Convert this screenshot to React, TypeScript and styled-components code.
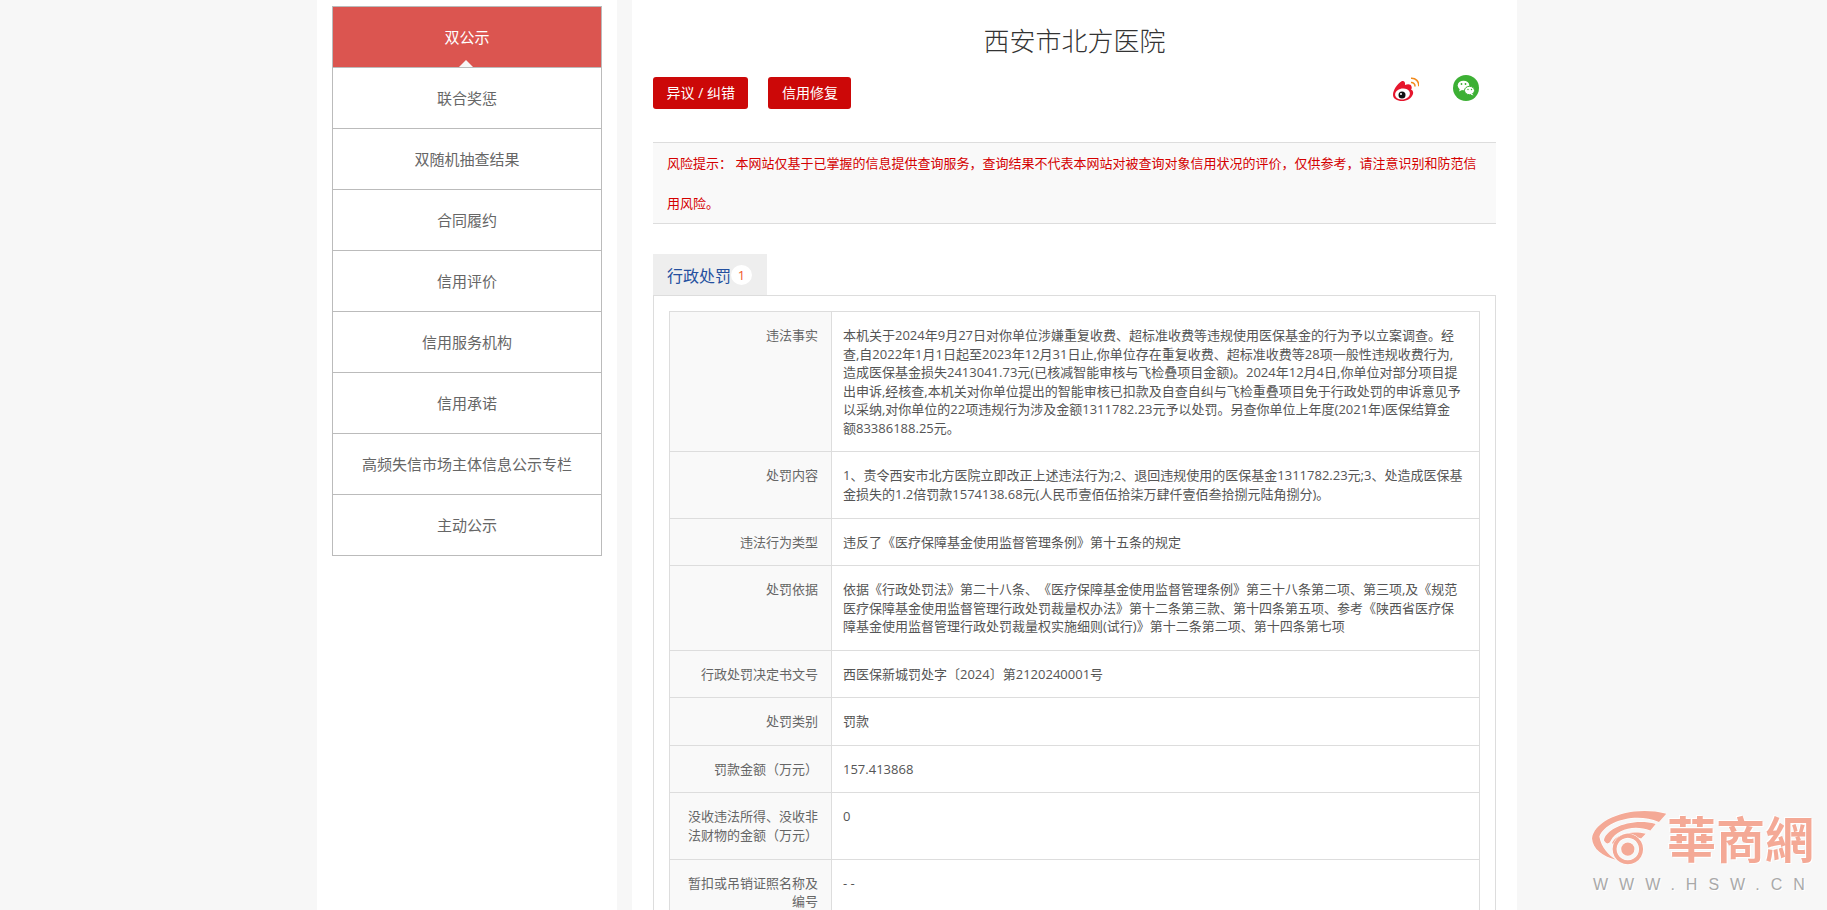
import React from 'react';
import styled, { createGlobalStyle } from 'styled-components';

const FONT = '"Open Sans", "Noto Sans CJK SC", "Liberation Sans", sans-serif';

const RISK_TEXT = '风险提示\uFF1A 本网站仅基于已掌握的信息提供查询服务\uFF0C查询结果不代表本网站对被查询对象信用状况的评价\uFF0C仅供参考\uFF0C请注意识别和防范信用风险。';

const menuItems = [
    '双公示',
    '联合奖惩',
    '双随机抽查结果',
    '合同履约',
    '信用评价',
    '信用服务机构',
    '信用承诺',
    '高频失信市场主体信息公示专栏',
    '主动公示',
];

const rows = [
    {
        label: '违法事实',
        lines: [
            '本机关于2024年9月27日对你单位涉嫌重复收费、超标准收费等违规使用医保基金的行为予以立案调查。经',
            '查,自2022年1月1日起至2023年12月31日止,你单位存在重复收费、超标准收费等28项一般性违规收费行为,',
            '造成医保基金损失2413041.73元(已核减智能审核与飞检叠项目金额)。2024年12月4日,你单位对部分项目提',
            '出申诉,经核查,本机关对你单位提出的智能审核已扣款及自查自纠与飞检重叠项目免于行政处罚的申诉意见予',
            '以采纳,对你单位的22项违规行为涉及金额1311782.23元予以处罚。另查你单位上年度(2021年)医保结算金',
            '额83386188.25元。',
        ],
    },
    {
        label: '处罚内容',
        lines: [
            '1、责令西安市北方医院立即改正上述违法行为;2、退回违规使用的医保基金1311782.23元;3、处造成医保基',
            '金损失的1.2倍罚款1574138.68元(人民币壹佰伍拾柒万肆仟壹佰叁拾捌元陆角捌分)。',
        ],
    },
    { label: '违法行为类型', lines: ['违反了《医疗保障基金使用监督管理条例》第十五条的规定'] },
    {
        label: '处罚依据',
        lines: [
            '依据《行政处罚法》第二十八条、《医疗保障基金使用监督管理条例》第三十八条第二项、第三项,及《规范',
            '医疗保障基金使用监督管理行政处罚裁量权办法》第十二条第三款、第十四条第五项、参考《陕西省医疗保',
            '障基金使用监督管理行政处罚裁量权实施细则(试行)》第十二条第二项、第十四条第七项',
        ],
    },
    { label: '行政处罚决定书文号', lines: ['西医保新城罚处字〔2024〕第2120240001号'] },
    { label: '处罚类别', lines: ['罚款'] },
    { label: '罚款金额\uFF08万元\uFF09', lines: ['157.413868'] },
    { label: '没收违法所得、没收非法财物的金额\uFF08万元\uFF09', lines: ['0'] },
    { label: '暂扣或吊销证照名称及编号', lines: ['- -'] },
];

const WeiboIcon = () => (
    <svg width="26" height="24" viewBox="0 0 26 24">
        <path d="M9 4C11 3.500 12.500 5 12 8C15 6.500 18 7 18.500 9.500C19 11 18.500 12 18 12.500C20 13.500 20.500 15 20 17C18.500 21.500 14 24 9 24C4 24 0 21.500 0 18C0 13 4 7 9 4z" fill="#e6162d" />
        <ellipse cx="9.500" cy="17" rx="7.500" ry="5.500" transform="rotate(-10 9.500 17)" fill="#fff" />
        <circle cx="9" cy="18" r="3.500" fill="#111" />
        <circle cx="8" cy="17" r="1" fill="#fff" />
        <path d="M18 5.500c2.300-.2 4.200 1.700 4 4" fill="none" stroke="#f28a1c" strokeWidth="1.500" />
        <path d="M18 1.300c4.800-.3 8.200 3.200 7.700 8" fill="none" stroke="#f28a1c" strokeWidth="1.500" />
    </svg>
);

const WechatIcon = () => (
    <svg width="26" height="26" viewBox="0 0 26 26">
        <circle cx="13" cy="13" r="13" fill="#3cb034" />
        <ellipse cx="10.500" cy="10.500" rx="5.800" ry="4.800" fill="#fff" />
        <path d="M7 13.500l-1 3 3-1.500z" fill="#fff" />
        <ellipse cx="16.500" cy="15.500" rx="5" ry="4.200" fill="#fff" stroke="#3cb034" strokeWidth="1" />
        <path d="M19 18.500l1.500 2-3-1z" fill="#fff" />
        <circle cx="8.500" cy="9" r="0.900" fill="#3cb034" />
        <circle cx="12.500" cy="9" r="0.900" fill="#3cb034" />
        <circle cx="15" cy="14.500" r="0.700" fill="#3cb034" />
        <circle cx="18.500" cy="14.500" r="0.700" fill="#3cb034" />
    </svg>
);

const EyeLogo = () => (
    <svg width="77" height="58" viewBox="55 80 230 175">
        <g fill="#f4a996" stroke="#fff" strokeWidth="3" paintOrder="stroke">
            <path d="M60 172C66 118 170 70 284 97L262 122C190 92 100 120 82 166C88 200 110 222 132 236C92 226 62 204 60 172z" />
            <path d="M96 178C100 142 180 108 252 128L236 148C186 128 134 146 118 176C112 190 104 190 96 178z" />
            <path d="M120 186C130 160 180 146 222 158L208 172C180 162 146 170 132 192z" />
            <path fillRule="evenodd" d="M168 158a46 46 0 1 0 .1 0zM168 170a34 34 0 1 1-.1 0z" />
            <circle cx="168" cy="204" r="20" />
        </g>
    </svg>
);

const App = () => (
    <Page>
        <GlobalStyle />
        <Container>
            <Sidebar>
                <Menu>
                    {menuItems.map((item, i) => (
                        <MenuItem key={item} $active={i === 0}>{item}</MenuItem>
                    ))}
                </Menu>
            </Sidebar>
            <Main>
                <Title>西安市北方医院</Title>
                <ActionBar>
                    <ActionButton>异议 / 纠错</ActionButton>
                    <ActionButton>信用修复</ActionButton>
                    <ShareIcons>
                        <ShareLink $top={2}><WeiboIcon /></ShareLink>
                        <ShareLink><WechatIcon /></ShareLink>
                    </ShareIcons>
                </ActionBar>
                <RiskNotice>{RISK_TEXT}</RiskNotice>
                <Tab>
                    <TabLabel>行政处罚</TabLabel>
                    <TabBadge>1</TabBadge>
                </Tab>
                <TabPanel>
                    <DetailTable>
                        <colgroup>
                            <col width="162" />
                            <col />
                        </colgroup>
                        <tbody>
                            {rows.map(row => (
                                <tr key={row.label}>
                                    <DetailLabel>{row.label}</DetailLabel>
                                    <DetailValue>
                                        {row.lines.map(line => <ValueLine key={line}>{line}</ValueLine>)}
                                    </DetailValue>
                                </tr>
                            ))}
                        </tbody>
                    </DetailTable>
                </TabPanel>
            </Main>
        </Container>
        <Watermark>
            <WatermarkTop>
                <EyeLogo />
                <WatermarkName>華商網</WatermarkName>
            </WatermarkTop>
            <WatermarkUrl>WWW.HSW.CN</WatermarkUrl>
        </Watermark>
    </Page>
);

export default App;

/*-----------------STYLES-----------------*/
const GlobalStyle = createGlobalStyle`
    html, body {
        margin: 0;
        padding: 0;
        height: 100%;
        overflow: hidden;
        background: #f7f7f7;
        font-family: ${FONT};
        text-spacing-trim: space-all;
    }
    * {
        box-sizing: border-box;
    }
`;

const Page = styled.div`
    position: relative;
    height: 910px;
    overflow: hidden;
    background: #f7f7f7;
`;

const Container = styled.div`
    display: flex;
    gap: 15px;
    width: 1200px;
    margin-left: 317px;
    min-height: 910px;
`;

const Sidebar = styled.aside`
    flex: none;
    width: 300px;
    padding: 6px 15px 0;
    background: #fff;
`;

const Menu = styled.ul`
    list-style: none;
    margin: 0;
    padding: 0;
    border: 1px solid #bbb;
    border-bottom: none;
`;

const MenuItem = styled.li<{ $active?: boolean }>`
    position: relative;
    height: 61px;
    line-height: 60px;
    text-align: center;
    font-size: 15px;
    color: ${p => (p.$active ? '#fff' : '#666')};
    background: ${p => (p.$active ? '#db5550' : '#fff')};
    border-bottom: 1px solid #bbb;

    ${p => p.$active ? `
    &::after {
        content: '';
        position: absolute;
        left: 50%;
        bottom: 0;
        margin-left: -8px;
        border-left: 7px solid transparent;
        border-right: 7px solid transparent;
        border-bottom: 7px solid #f7f7f7;
    }` : ''}
`;

const Main = styled.main`
    flex: none;
    width: 885px;
    padding: 0 21px;
    background: #fff;
`;

const Title = styled.h1`
    margin: 0;
    height: 77px;
    padding-top: 22px;
    font-size: 26px;
    line-height: 38px;
    font-weight: 300;
    text-align: center;
    color: #333;
`;

const ActionBar = styled.div`
    display: flex;
    align-items: flex-start;
    gap: 20px;
    height: 65px;
`;

const ActionButton = styled.button`
    height: 32px;
    padding: 0 13.500px;
    border: none;
    border-radius: 3px;
    background: #cc0808;
    color: #fff;
    font-family: ${FONT};
    font-size: 14px;
    line-height: 32px;
`;

const ShareIcons = styled.div`
    display: flex;
    gap: 34px;
    margin-left: auto;
    margin-right: 17px;
    margin-top: -2px;
`;

const ShareLink = styled.a<{ $top?: number }>`
    display: block;
    line-height: 0;
    margin-top: ${p => p.$top || 0}px;
`;

const RiskNotice = styled.div`
    height: 82px;
    padding: 0 12px 0 14px;
    border-top: 1px solid #ddd;
    border-bottom: 1px solid #ddd;
    background: #f9f9f9;
    color: #d40000;
    font-size: 13px;
    line-height: 40px;
    margin-bottom: 30px;
`;

const Tab = styled.div`
    display: flex;
    align-items: center;
    width: 114px;
    height: 41px;
    padding-left: 14px;
    background: #eee;
`;

const TabLabel = styled.span`
    font-size: 16px;
    color: #24509f;
`;

const TabBadge = styled.span`
    width: 21px;
    height: 20px;
    border-radius: 50%;
    background: #fff;
    color: #f1592a;
    font-size: 13px;
    line-height: 20px;
    text-align: center;
`;

const TabPanel = styled.div`
    padding: 15px;
    border: 1px solid #ddd;
`;

const DetailTable = styled.table`
    width: 100%;
    table-layout: fixed;
    border-collapse: collapse;
    border: 1px solid #ddd;
    font-size: 13px;
    line-height: 18.57px;
`;

const DetailLabel = styled.th`
    padding: 14px 13px 14px 14px;
    border: 1px solid #ddd;
    background: #f9f9f9;
    color: #666;
    font-weight: 400;
    text-align: right;
    vertical-align: top;
`;

const DetailValue = styled.td`
    padding: 14px 12px 14px 11px;
    border: 1px solid #ddd;
    color: #555;
    vertical-align: top;
`;

const ValueLine = styled.div`
    white-space: nowrap;
`;

const Watermark = styled.div`
    position: absolute;
    left: 1590px;
    top: 798px;
    width: 225px;
`;

const WatermarkTop = styled.div`
    display: flex;
    align-items: center;
    height: 78px;
`;

const WatermarkName = styled.span`
    font-family: "Noto Sans CJK TC", sans-serif;
    font-size: 49px;
    line-height: 70px;
    font-weight: 700;
    color: #f4a996;
    text-shadow: 1px 1px 0 #fff, -1px -1px 0 #fff;
    white-space: nowrap;
`;

const WatermarkUrl = styled.div`
    margin: 1px 0 0 3px;
    font-family: "Liberation Sans", sans-serif;
    font-size: 16px;
    line-height: 16px;
    letter-spacing: 11px;
    color: #a9a9a9;
    white-space: nowrap;
    text-shadow: 1px 1px 0 #fff;
`;
